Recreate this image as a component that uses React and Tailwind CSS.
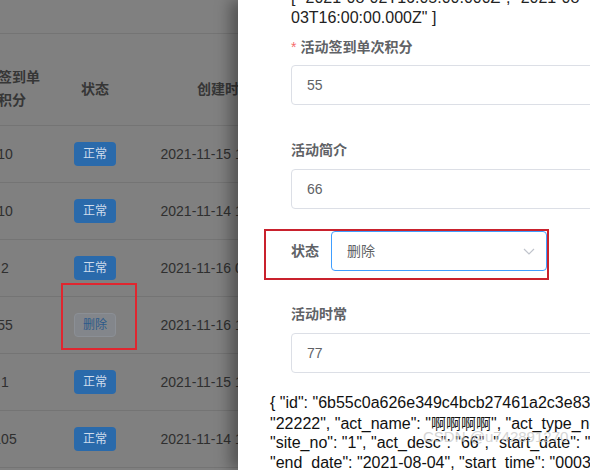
import React from "react";

const rows = [
  { n: "10", tag: "正常", date: "2021-11-15 10:21:33" },
  { n: "10", tag: "正常", date: "2021-11-14 15:08:12" },
  { n: "2", tag: "正常", date: "2021-11-16 09:42:51" },
  { n: "55", tag: "删除", date: "2021-11-16 14:30:07" },
  { n: "1", tag: "正常", date: "2021-11-15 16:12:45" },
  { n: "105", tag: "正常", date: "2021-11-14 17:55:20" },
];

function Row({ r }) {
  return (
    <div className="flex h-[57px] items-center border-b border-[#747474] text-[14px] text-[#2f2f2f]">
      <div className="w-[80px] -ml-[35px] shrink-0 text-center">{r.n}</div>
      <div className="w-[100px] shrink-0 flex justify-center">
        {r.tag === "正常" ? (
          <span className="h-[24px] px-[9px] rounded-[4px] bg-[#2a6aab] text-[#cfdcec] text-[12px] leading-[24px]">
            正常
          </span>
        ) : (
          <span className="h-[24px] px-[8px] rounded-[4px] bg-[#83868b] border border-[#8b8f95] text-[#2c5a8a] text-[12px] leading-[22px]">
            删除
          </span>
        )}
      </div>
      <div className="w-[160px] shrink-0 text-center whitespace-nowrap">{r.date}</div>
    </div>
  );
}

function Input({ value }) {
  return (
    <div className="w-[330px] h-[40px] border border-[#dcdfe6] rounded-[4px] px-[15px] flex items-center text-[14px] text-[#606266]">
      {value}
    </div>
  );
}

function Label({ children, required }) {
  return (
    <div className="h-[22px] leading-[22px] text-[14px] font-bold text-[#606266] whitespace-nowrap">
      {required && <span className="text-[#f56c6c] mr-[4px] font-normal">*</span>}
      {children}
    </div>
  );
}

export default function App() {
  return (
    <div className="relative w-[590px] h-[470px] overflow-hidden flex bg-white font-['Liberation_Sans','Noto_Sans_CJK_SC',sans-serif]">
      {/* table behind overlay */}
      <div className="relative w-[238px] shrink-0 h-full bg-[#808080] overflow-hidden">
        <div className="h-[34px] border-b border-[#747474]" />
        <div className="flex h-[92px] pt-[19px] items-center border-b border-[#747474] font-bold text-[14px] text-[#363636]">
          <div className="w-[80px] -ml-[35px] shrink-0 text-center leading-[23px] whitespace-nowrap">
            活动签到单
            <br />
            次积分
          </div>
          <div className="w-[100px] shrink-0 text-center">状态</div>
          <div className="w-[160px] shrink-0 text-center">创建时间</div>
        </div>
        {rows.map((r, i) => (
          <Row key={i} r={r} />
        ))}
        <div className="absolute left-[61px] top-[283px] w-[76px] h-[67px] border-2 border-[#e0262f]" />
      </div>

      {/* drawer */}
      <div className="relative z-10 flex-1 h-full bg-white shadow-[-8px_0_14px_rgba(0,0,0,0.35)] overflow-hidden">
        <div className="pl-[32px] -mt-[12px]">
          <div className="ml-[21px] text-[16px] leading-[20px] text-[#222] whitespace-nowrap">
            [ "2021-08-02T16:05:00.000Z", "2021-08-
            <br />
            03T16:00:00.000Z" ]
          </div>

          <div className="ml-[21px] mt-[8px]">
            <Label required>活动签到单次积分</Label>
          </div>
          <div className="ml-[21px] mt-[7px]">
            <Input value="55" />
          </div>

          <div className="ml-[21px] mt-[34px]">
            <Label>活动简介</Label>
          </div>
          <div className="ml-[21px] mt-[8px]">
            <Input value="66" />
          </div>

          <div className="-ml-[6px] mt-[20px] w-fit border-2 border-[#c9212d] pl-[25px] pb-[7px] flex items-center">
            <div className="text-[14px] font-bold text-[#606266] mr-[12px]">状态</div>
            <div className="w-[216px] h-[40px] border border-[#409eff] rounded-[4px] pl-[15px] pr-[10px] flex items-center justify-between text-[14px] text-[#606266]">
              <span>删除</span>
              <svg width="14" height="14" viewBox="0 0 14 14" fill="none">
                <polyline points="2,5 7,10 12,5" stroke="#c0c4cc" strokeWidth="1.2" />
              </svg>
            </div>
          </div>

          <div className="ml-[21px] mt-[23px]">
            <Label>活动时常</Label>
          </div>
          <div className="ml-[21px] mt-[8px]">
            <Input value="77" />
          </div>

          <div className="mt-[20px] text-[16px] leading-[19.7px] text-[#111] whitespace-nowrap">
            <div>{'{ "id": "6b55c0a626e349c4bcb27461a2c3e83a", "act_no":'}</div>
            <div>
              {'"22222", "act_name": "'}
              <span className="font-['Noto_Sans_CJK_SC',sans-serif] text-[15px] text-[#111]">啊啊啊啊</span>
              {'", "act_type_no": "1",'}
            </div>
            <div>{'"site_no": "1", "act_desc": "66", "start_date": "2021-08-02",'}</div>
            <div>{'"end_date": "2021-08-04", "start_time": "0003",'}</div>
            <div>{'"end_time": "0000", "act_location": "11",'}</div>
          </div>
        </div>
        <div className="absolute left-[185px] top-[426px] text-[15px] text-[#c4c4c4] opacity-70 whitespace-nowrap">
          CSDN @u742891270
        </div>
      </div>
    </div>
  );
}
